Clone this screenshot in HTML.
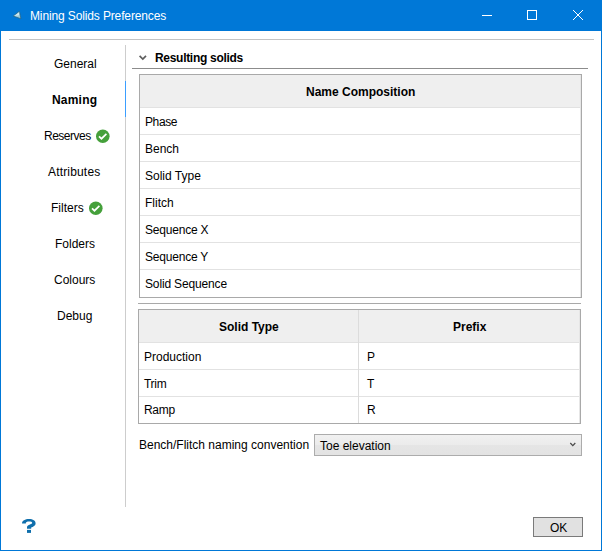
<!DOCTYPE html>
<html><head><meta charset="utf-8">
<style>
*{margin:0;padding:0;box-sizing:border-box}
html,body{width:602px;height:551px;overflow:hidden;background:#fff}
body{position:relative;font-family:"Liberation Sans",sans-serif;font-size:12px;color:#000}
.a{position:absolute}
.t{position:absolute;line-height:14px;white-space:nowrap}
.b{font-weight:bold}
</style></head><body>
<!-- window frame -->
<div class="a" style="left:0;top:0;width:602px;height:31px;background:#0078d7"></div>
<div class="a" style="left:0;top:0;width:1px;height:551px;background:#0078d7"></div>
<div class="a" style="left:601px;top:0;width:1px;height:551px;background:#0078d7"></div>
<div class="a" style="left:0;top:550px;width:602px;height:1px;background:#0078d7"></div>
<!-- title icon -->
<svg class="a" style="left:12px;top:10px" width="11" height="11" viewBox="0 0 11 11">
<path d="M1.2 6.1 L7.4 1.3 L8.9 8.7 Z" fill="#9ccbdb" stroke="#24627f" stroke-width="0.7" stroke-linejoin="round"/>
<path d="M2.2 6 L7.2 2.2 L7 5.3 Z" fill="#d3eaf2"/>
</svg>
<div class="t" style="left:30px;top:9px;color:#fff;letter-spacing:-0.13px">Mining Solids Preferences</div>
<!-- window buttons -->
<div class="a" style="left:482px;top:15px;width:10px;height:1px;background:#fff"></div>
<div class="a" style="left:527px;top:10px;width:10px;height:10px;border:1px solid #fff"></div>
<svg class="a" style="left:573px;top:10px" width="10" height="10" viewBox="0 0 10 10">
<path d="M0 0 L10 10 M10 0 L0 10" stroke="#fff" stroke-width="1"/>
</svg>

<!-- top grey line -->
<div class="a" style="left:9px;top:39px;width:585px;height:1px;background:#c4c4c4"></div>

<!-- nav -->
<div class="a" style="left:125px;top:45px;width:1px;height:462px;background:#cdcdcd"></div>
<div class="a" style="left:125px;top:81px;width:1px;height:36px;background:#3b9eff"></div>

<div class="t" style="left:54px;top:57px">General</div>
<div class="t b" style="left:52px;top:93px;letter-spacing:0.2px">Naming</div>
<div class="t" style="left:44px;top:129px;letter-spacing:-0.5px">Reserves</div>
<div class="t" style="left:48px;top:165px;letter-spacing:0.17px">Attributes</div>
<div class="t" style="left:51px;top:201px">Filters</div>
<div class="t" style="left:55px;top:237px">Folders</div>
<div class="t" style="left:54px;top:273px">Colours</div>
<div class="t" style="left:57px;top:309px">Debug</div>
<svg class="a" style="left:96px;top:129px" width="14" height="14" viewBox="0 0 14 14">
<circle cx="6.8" cy="7.2" r="6.8" fill="#45a03b"/>
<path d="M3 7.3 L5.5 9.7 L10.4 4.9" stroke="#fff" stroke-width="1.7" fill="none"/>
</svg>
<svg class="a" style="left:89px;top:201px" width="14" height="14" viewBox="0 0 14 14">
<circle cx="6.8" cy="7.2" r="6.8" fill="#45a03b"/>
<path d="M3 7.3 L5.5 9.7 L10.4 4.9" stroke="#fff" stroke-width="1.7" fill="none"/>
</svg>

<!-- expander header -->
<svg class="a" style="left:138px;top:54px" width="10" height="7" viewBox="0 0 10 7">
<path d="M1.6 1.8 L4.8 5 L8 1.8" stroke="#5e5e5e" stroke-width="1.7" fill="none"/>
</svg>
<div class="t b" style="left:155px;top:51px;letter-spacing:-0.3px">Resulting solids</div>
<div class="a" style="left:132px;top:68px;width:456px;height:1px;background:#8c8c8c"></div>

<!-- table 1 -->
<div class="a" style="left:139px;top:74px;width:443px;height:224px;border:1px solid #a9a9a9;background:#fff"></div>
<div class="a" style="left:140px;top:75px;width:440px;height:32px;background:#efefef"></div>
<div class="a" style="left:580px;top:75px;width:1px;height:222px;background:#e6e6e6"></div>
<div class="t b" style="left:306px;top:85px">Name Composition</div>
<div class="a" style="left:140px;top:107px;width:440px;height:1px;background:#e2e2e2"></div>
<div class="a" style="left:140px;top:134px;width:440px;height:1px;background:#e2e2e2"></div>
<div class="a" style="left:140px;top:161px;width:440px;height:1px;background:#e2e2e2"></div>
<div class="a" style="left:140px;top:188px;width:440px;height:1px;background:#e2e2e2"></div>
<div class="a" style="left:140px;top:215px;width:440px;height:1px;background:#e2e2e2"></div>
<div class="a" style="left:140px;top:242px;width:440px;height:1px;background:#e2e2e2"></div>
<div class="a" style="left:140px;top:269px;width:440px;height:1px;background:#e2e2e2"></div>
<div class="t" style="left:145px;top:115px;letter-spacing:-0.4px">Phase</div>
<div class="t" style="left:145px;top:142px">Bench</div>
<div class="t" style="left:145px;top:169px">Solid Type</div>
<div class="t" style="left:145px;top:196px">Flitch</div>
<div class="t" style="left:145px;top:223px;letter-spacing:-0.2px">Sequence X</div>
<div class="t" style="left:145px;top:250px;letter-spacing:-0.2px">Sequence Y</div>
<div class="t" style="left:145px;top:277px;letter-spacing:-0.15px">Solid Sequence</div>

<!-- separator -->
<div class="a" style="left:138px;top:303px;width:443px;height:1px;background:#a9a9a9"></div>

<!-- table 2 -->
<div class="a" style="left:138px;top:309px;width:443px;height:115px;border:1px solid #a9a9a9;background:#fff"></div>
<div class="a" style="left:139px;top:310px;width:440px;height:32px;background:#efefef"></div>
<div class="a" style="left:579px;top:310px;width:1px;height:113px;background:#e6e6e6"></div>
<div class="a" style="left:139px;top:342px;width:440px;height:1px;background:#e2e2e2"></div>
<div class="a" style="left:139px;top:369px;width:440px;height:1px;background:#e2e2e2"></div>
<div class="a" style="left:139px;top:396px;width:440px;height:1px;background:#e2e2e2"></div>
<div class="a" style="left:358px;top:310px;width:1px;height:113px;background:#dcdcdc"></div>
<div class="t b" style="left:219px;top:320px">Solid Type</div>
<div class="t b" style="left:453px;top:320px">Prefix</div>
<div class="t" style="left:144px;top:350px">Production</div>
<div class="t" style="left:144px;top:377px;letter-spacing:-0.3px">Trim</div>
<div class="t" style="left:144px;top:403px;letter-spacing:-0.3px">Ramp</div>
<div class="t" style="left:367px;top:350px">P</div>
<div class="t" style="left:367px;top:377px">T</div>
<div class="t" style="left:367px;top:403px">R</div>

<!-- bench/flitch -->
<div class="t" style="left:139px;top:438px">Bench/Flitch naming convention</div>
<div class="a" style="left:314px;top:434px;width:268px;height:22px;border:1px solid #acacac;background:linear-gradient(#f1f1f1,#ebebeb 50%,#e5e5e5 51%,#e3e3e3)"></div>
<div class="t" style="left:320px;top:439px">Toe elevation</div>
<svg class="a" style="left:569px;top:442px" width="8" height="6" viewBox="0 0 8 6">
<path d="M1.3 1 L3.8 3.7 L6.3 1" stroke="#4a4a4a" stroke-width="1.25" fill="none"/>
</svg>

<!-- help -->
<svg class="a" style="left:22px;top:519px" width="14" height="14" viewBox="0 0 14 14">
<path d="M0 4.6 C0 1.6 3.2 0 7 0 C11 0 13.6 1.8 13.6 4.4 C13.6 6.8 11 7.6 9.2 8.6 L9.2 9.7 L5 9.7 L5 8 C5 6.5 6.5 6 8 5.4 C9.4 4.8 10.2 4.4 10.2 3.9 C10.2 3 8.9 2.6 7.1 2.6 C5 2.6 3.8 3.2 3.8 4.6 Z" fill="#0f6fac"/>
<rect x="5" y="10.9" width="4" height="3" fill="#0f6fac"/>
</svg>

<!-- OK -->
<div class="a" style="left:533px;top:517px;width:50px;height:20px;border:1px solid #7a7a7a;background:#e1e1e1"></div>
<div class="t" style="left:550px;top:521px">OK</div>
</body></html>
